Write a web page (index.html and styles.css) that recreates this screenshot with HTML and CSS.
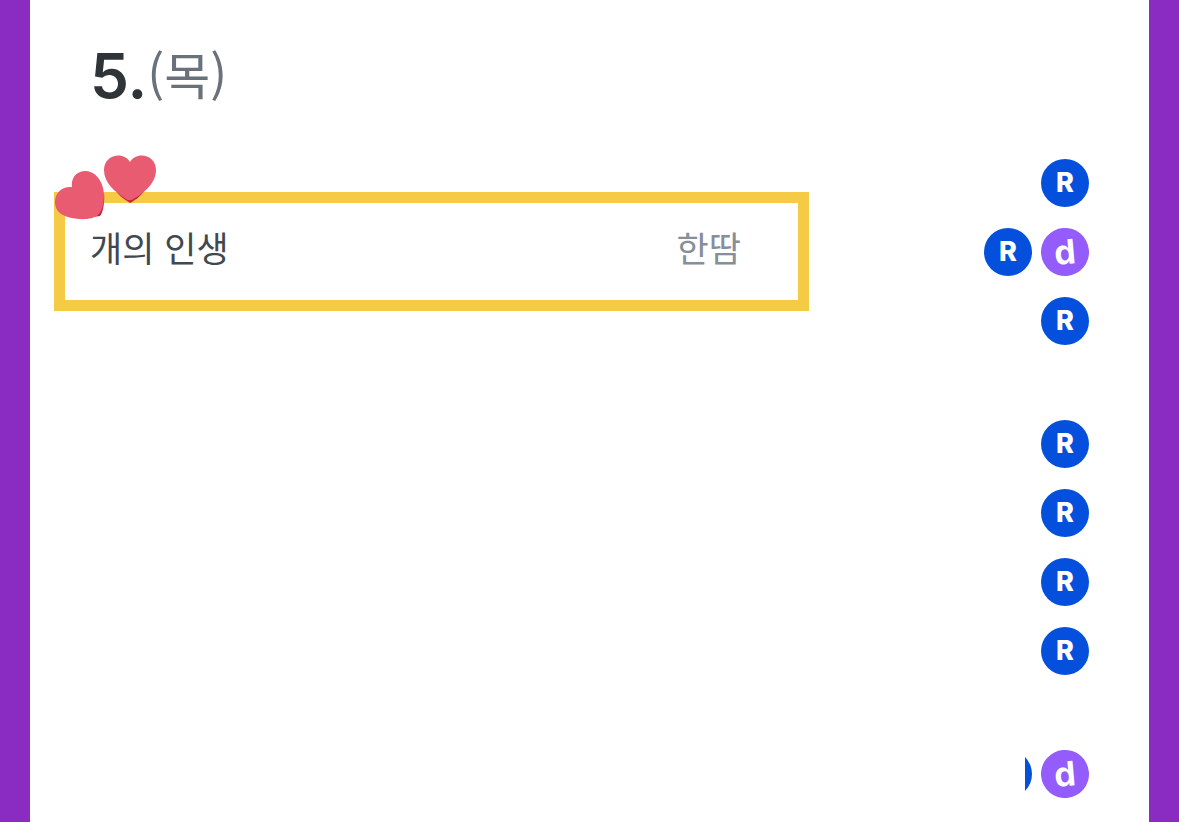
FILE: index.html
```
<!DOCTYPE html>
<html lang="ko">
<head>
    <meta charset="UTF-8">
    <meta name="viewport" content="width=device-width, initial-scale=1.0">
    <title>5.(목)</title>
    <link rel="stylesheet" href="styles.css">
</head>
<body>
    <main class="page">
        <h1 class="date">5.<span class="weekday">(목)</span></h1>

        <div class="schedule">
            <section class="entry">
                <svg class="hearts" viewBox="0 0 104 66" aria-hidden="true">
                    <path fill="#c9213f" d="M76 48 C72 45 66 42 61 35 L91 35 C86 42 80 46 76 48Z"/>
                    <path fill="#e85b70" d="M72 44 C61 37 50 28 50 15 C50 -1 70 -4 76 7 C82 -4 102 -1 102 15 C102 28 90 38 81 43 Q76 47 72 44Z"/>
                    <path fill="#c9213f" d="M46 61 C49 58 51 46 50 38 L32 63Z"/>
                    <path fill="#e85b70" d="M18 32 C17 24 21 16 32 16 C44 17 50 30 50 40 C50 49 48 56 44 60 C38 66 18 65 9 60 C3 57 1 52 1 47 C1 37 9 31 18 32Z"/>
                </svg>
                <span class="title">개의 인생</span>
                <span class="author">한땀</span>
            </section>

            <div class="badges">
                <div class="group">
                    <div class="row"><span class="badge blue">R</span></div>
                    <div class="row"><span class="badge blue">R</span><span class="badge purple">d</span></div>
                    <div class="row"><span class="badge blue">R</span></div>
                </div>
                <div class="group">
                    <div class="row"><span class="badge blue">R</span></div>
                    <div class="row"><span class="badge blue">R</span></div>
                    <div class="row"><span class="badge blue">R</span></div>
                    <div class="row"><span class="badge blue">R</span></div>
                </div>
                <div class="group">
                    <div class="row"><span class="badge blue cut"></span><span class="badge purple">d</span></div>
                </div>
            </div>
        </div>
    </main>
</body>
</html>
```
FILE: styles.css
```
* {
    box-sizing: border-box;
}

body {
    margin: 0;
    background-color: #fff;
    font-family: "Noto Sans CJK KR", sans-serif;
}

.page {
    min-height: 100vh;
    padding: 36px 60px 24px 24px;
    border: solid #8a2bc2;
    border-width: 0 30px;
}

.date {
    display: flex;
    align-items: flex-start;
    margin: 0 0 43px;
    padding-left: 36px;
    color: #2f3438;
    font-family: Inter, sans-serif;
    font-size: 62px;
    font-weight: 600;
    line-height: 80px;
}

.weekday {
    color: #69727a;
    font-family: "Noto Sans CJK KR", sans-serif;
    font-size: 50px;
    font-weight: 400;
    line-height: 74px;
}

.schedule {
    display: grid;
    grid-template-columns: 755fr 280fr;
    align-items: start;
}

.entry {
    position: relative;
    display: flex;
    justify-content: space-between;
    margin-top: 33px;
    padding: 17px 57px 26px 25px;
    border: 11px solid #f5cb45;
    font-size: 35px;
    line-height: 54px;
}

.hearts {
    position: absolute;
    top: -48px;
    left: -11px;
    width: 104px;
    height: 66px;
}

.title {
    color: #424850;
}

.author {
    color: #868e99;
}

.badges {
    display: flex;
    flex-direction: column;
    gap: 75px;
}

.group {
    display: flex;
    flex-direction: column;
    gap: 21px;
}

.row {
    display: flex;
    justify-content: flex-end;
    gap: 9px;
}

.badge {
    width: 48px;
    height: 48px;
    border-radius: 50%;
    color: #fff;
    font-family: Inter, sans-serif;
    font-size: 27px;
    font-weight: 800;
    line-height: 48px;
    text-align: center;
}

.blue {
    background-color: #0450dc;
}

.purple {
    background-color: #935cfb;
    font-size: 34px;
    font-weight: 700;
    transform: rotate(-5deg);
}

/* only the right edge of this badge is visible */
.cut {
    clip-path: inset(0 0 0 41px);
}
```
